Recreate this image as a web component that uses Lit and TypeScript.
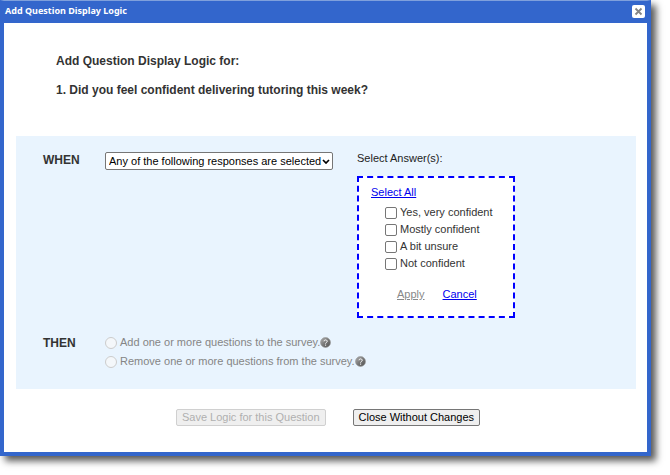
import { LitElement, html, css } from "lit";
import { customElement, state } from "lit/decorators.js";

@customElement("help-icon")
class HelpIcon extends LitElement {
  static styles = css`
    :host { display: inline-flex; }
    svg { display: block; width: 11px; height: 11px; }
  `;
  render() {
    return html`<svg viewBox="0 0 11 11" role="img" aria-label="Help">
      <defs>
        <linearGradient id="g" x1="0" y1="0" x2="1" y2="1">
          <stop offset="0" stop-color="#b0b0b0" />
          <stop offset="0.5" stop-color="#787878" />
          <stop offset="1" stop-color="#505050" />
        </linearGradient>
      </defs>
      <circle cx="5.5" cy="5.5" r="5" fill="url(#g)" stroke="#999" stroke-width="0.6" />
      <path d="M4 4.300a1.600 1.400 0 1 1 2.400 1.200q-.8.4-.8 1.100" fill="none" stroke="#fff" stroke-width="1" />
      <circle cx="5.600" cy="8.100" r="0.650" fill="#fff" />
    </svg>`;
  }
}

@customElement("app-root")
class AppRoot extends LitElement {
  @state() answers = ["Yes, very confident", "Mostly confident", "A bit unsure", "Not confident"];
  @state() actions = [
    "Add one or more questions to the survey.",
    "Remove one or more questions from the survey.",
  ];

  static styles = css`
    :host {
      display: block;
      padding: 0 19px 19px 0;
      font: 11px/17px "Liberation Sans", Arial, sans-serif;
      color: #333;
    }
    .dialog {
      background: #fff;
      border: 4px solid #3366cc;
      border-top: 1px solid #7fa0dc;
      box-shadow: 5px 5px 7px rgba(0, 0, 0, 0.65);
    }
    .titlebar {
      display: flex;
      align-items: center;
      justify-content: space-between;
      height: 20px;
      padding: 0 2px 2px 1px;
      background: #3366cc;
      color: #fff;
    }
    .title {
      margin: 0;
      font: bold 9px/14px "Noto Sans", sans-serif;
    }
    .close {
      display: flex;
      width: 13px;
      height: 13px;
      padding: 0;
      border: 0;
      border-radius: 2px;
      background: #fff;
    }
    .intro { padding: 30px 52px 25px; }
    .intro p {
      margin: 0 0 12px;
      font-size: 12px;
      line-height: 17px;
      font-weight: bold;
    }
    .panel {
      display: grid;
      grid-template-columns: 62px 228px 1fr;
      padding: 14px 27px 18px;
      margin: 0 11px 0 12px;
      background: #e9f4fe;
    }
    .key { margin: 0; font-size: 12px; line-height: 20px; font-weight: bold; }
    select {
      width: 100%;
      height: 18px;
      margin-top: 2px;
      padding: 0 10px 0 3px;
      border: 1px solid #767676;
      border-radius: 2px;
      appearance: none;
      background: #fff;
      font: inherit;
      color: #000;
    }
    .picker { position: relative; }
    .picker svg {
      position: absolute;
      right: 3px;
      top: 9px;
      width: 8px;
      height: 5px;
      pointer-events: none;
    }
    .answers { padding-left: 24px; }
    .caption { margin: 0 0 9px; color: #222; }
    .box {
      box-sizing: border-box;
      width: 158px;
      padding: 6px 12px 13px;
      border: 2px dashed #0000ff;
      background: #fff;
    }
    a { color: #0000ee; }
    .all { display: block; width: max-content; margin-bottom: 3px; }
    .option { display: flex; align-items: center; gap: 3px; height: 17px; }
    .box .option { padding-left: 14px; }
    input {
      appearance: none;
      box-sizing: border-box;
      width: 12px;
      height: 12px;
      margin: 0;
      border: 1px solid #767676;
      border-radius: 2px;
      background: #fff;
    }
    .links { display: flex; gap: 18px; margin: 14px 0 0 26px; }
    .apply { color: #888; }
    .then { margin-top: 15px; }
    .actions { grid-column: 2 / -1; }
    .actions .option { height: 19px; color: #858585; }
    .actions label { margin-right: -3px; }
    .actions input { border-color: #ccc; border-radius: 50%; background: #f4f7fa; }
    .footer { display: flex; justify-content: center; gap: 27px; padding: 20px 0 26px 5px; }
    .footer button {
      height: 17px;
      padding: 0 5px;
      border: 1px solid #767676;
      border-radius: 2px;
      background: #efefef;
      font: inherit;
      line-height: 15px;
      color: #000;
    }
    .footer button:disabled { border-color: #d0d0d0; color: #b0b0b0; }
  `;

  render() {
    return html`
      <section class="dialog" role="dialog" aria-labelledby="title">
        <header class="titlebar">
          <h1 class="title" id="title">Add Question Display Logic</h1>
          <button class="close" aria-label="Close">
            <svg viewBox="0 0 13 13" width="13" height="13">
              <path d="M3.500 3.500l6 6M9.500 3.500l-6 6" stroke="#858585" stroke-width="1.800" />
            </svg>
          </button>
        </header>
        <div class="intro">
          <p>Add Question Display Logic for:</p>
          <p>1. Did you feel confident delivering tutoring this week?</p>
        </div>
        <div class="panel">
          <h2 class="key">WHEN</h2>
          <div class="picker">
            <select aria-label="When">
              <option>Any of the following responses are selected</option>
            </select>
            <svg viewBox="0 0 8 5"><path d="M1 1l3 3 3-3" fill="none" stroke="#000" stroke-width="1.700" /></svg>
          </div>
          <div class="answers">
            <p class="caption">Select Answer(s):</p>
            <div class="box">
              <a class="all" href="#all">Select All</a>
              ${this.answers.map((text, i) => html`
                <div class="option">
                  <input type="checkbox" id="answer${i}" />
                  <label for="answer${i}">${text}</label>
                </div>`)}
              <div class="links">
                <a class="apply" href="#apply">Apply</a>
                <a href="#cancel">Cancel</a>
              </div>
            </div>
          </div>
          <h2 class="key then">THEN</h2>
          <div class="actions then">
            ${this.actions.map((text, i) => html`
              <div class="option">
                <input type="radio" name="action" id="action${i}" disabled />
                <label for="action${i}">${text}</label>
                <help-icon></help-icon>
              </div>`)}
          </div>
        </div>
        <footer class="footer">
          <button disabled>Save Logic for this Question</button>
          <button>Close Without Changes</button>
        </footer>
      </section>
    `;
  }
}
